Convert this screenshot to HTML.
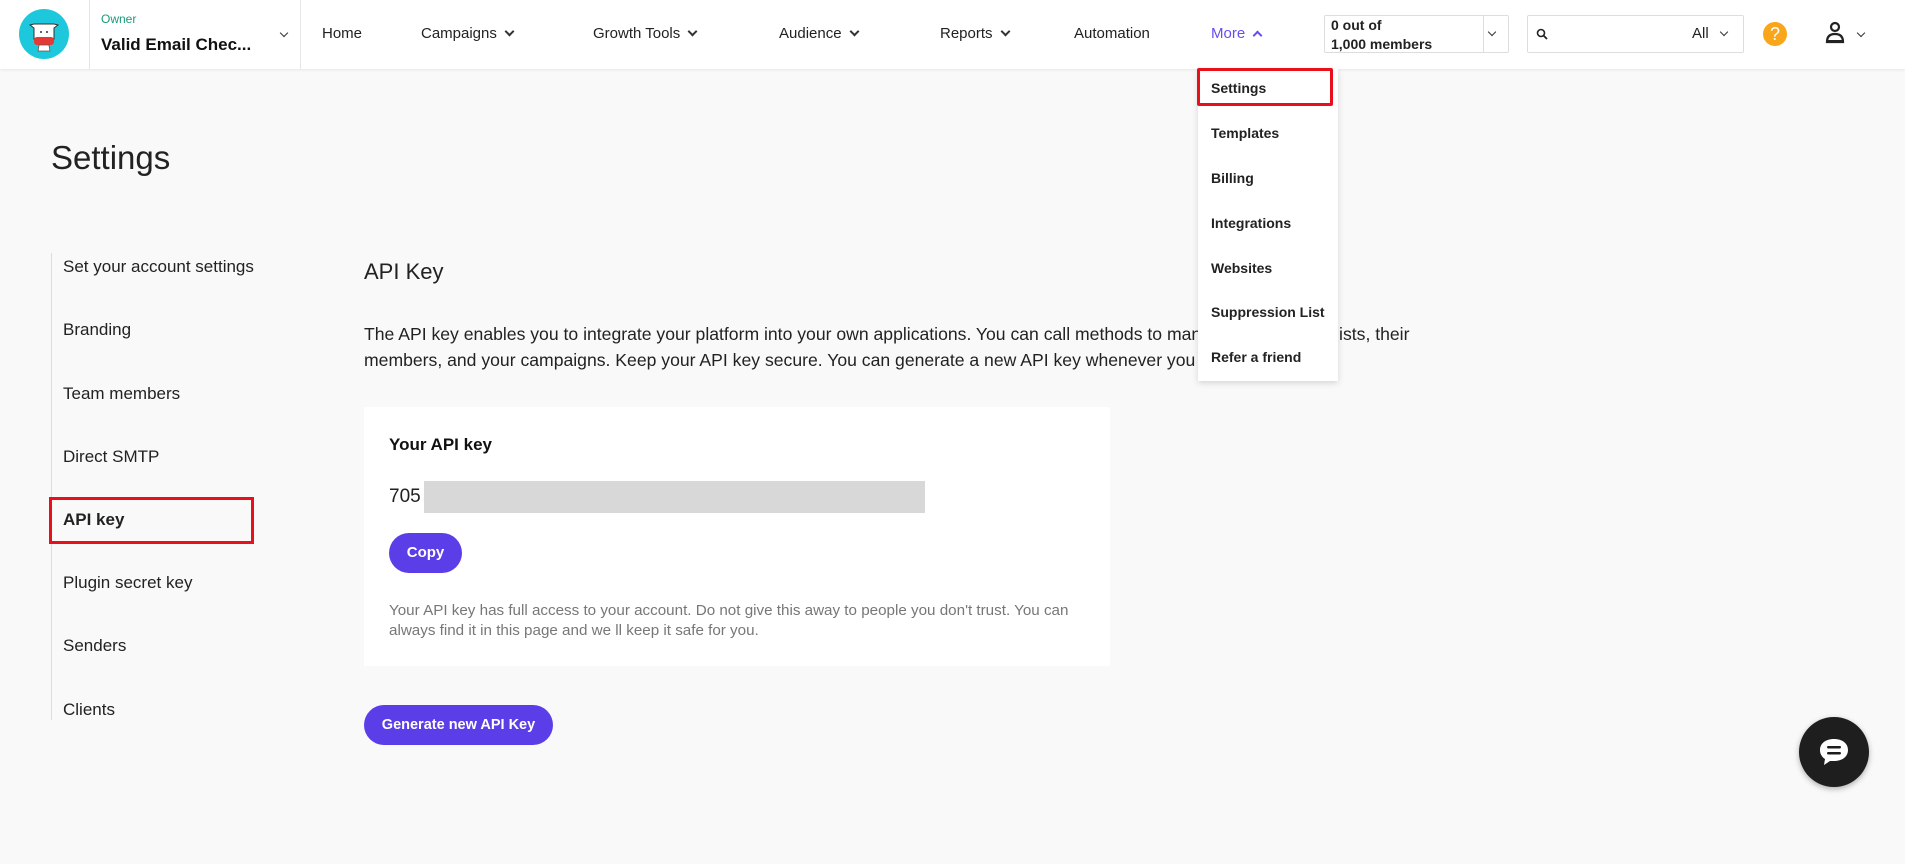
<!DOCTYPE html>
<html><head><meta charset="utf-8"><style>
*{margin:0;padding:0;box-sizing:border-box}
body{width:1905px;height:864px;background:#f9f9f9;font-family:"Liberation Sans",sans-serif;color:#222;position:relative;overflow:hidden}
.a{position:absolute;white-space:nowrap}
.hdr{position:absolute;left:0;top:0;width:1905px;height:69px;background:#fff;box-shadow:0 1px 3px rgba(0,0,0,.08)}
.nav{font-size:15px;color:#222;top:25px}
.chev{display:inline-block;width:7px;height:7px;border-right:2px solid #333;border-bottom:2px solid #333;transform:rotate(45deg);margin-left:9px;position:relative;top:-3px}
.mi{font-size:14px;font-weight:bold;left:1211px;color:#222}
.lm{font-size:17px;left:63px;color:#222}
.btn{background:#5b3ee8;color:#fff;font-weight:bold;border-radius:20px;text-align:center}
</style></head><body>
<div class="hdr"></div>
<svg class="a" style="left:19px;top:9px" width="50" height="50" viewBox="0 0 50 50">
<circle cx="25" cy="25" r="25" fill="#1ec8dc"/>
<path d="M11 16 L15 19 L15 30 L35 30 L35 19 L39 16 L35 15 L15 15 Z" fill="#fff" stroke="#333" stroke-width="1"/>
<rect x="15" y="28" width="20" height="8" rx="3" fill="#e53935"/>
<circle cx="22" cy="23" r="1" fill="#333"/><circle cx="28" cy="23" r="1" fill="#333"/>
<path d="M20 36 L30 36 L31 42 L19 42 Z" fill="#fff" stroke="#555" stroke-width=".8"/>
</svg>
<div class="a" style="left:89px;top:0;width:1px;height:69px;background:#e5e5e5"></div>
<div class="a" style="left:300px;top:0;width:1px;height:69px;background:#e5e5e5"></div>
<div class="a" style="left:101px;top:12px;font-size:12px;color:#1a9a7a">Owner</div>
<div class="a" style="left:101px;top:35px;font-size:17px;font-weight:bold;color:#111">Valid Email Chec...</div>
<div class="a" style="left:272px;top:26px"><span class="chev" style="width:6px;height:6px;border-width:1.5px"></span></div>
<div class="a nav" style="left:322px">Home</div>
<div class="a nav" style="left:421px">Campaigns<span class="chev"></span></div>
<div class="a nav" style="left:593px">Growth Tools<span class="chev"></span></div>
<div class="a nav" style="left:779px">Audience<span class="chev"></span></div>
<div class="a nav" style="left:940px">Reports<span class="chev"></span></div>
<div class="a nav" style="left:1074px">Automation</div>
<div class="a nav" style="left:1211px;color:#6a4cf0">More<span class="chev" style="border-color:#6a4cf0;transform:rotate(-135deg);top:1px"></span></div>
<div class="a" style="left:1324px;top:15px;width:185px;height:38px;border:1px solid #ddd;border-radius:2px;background:#fff"></div>
<div class="a" style="left:1483px;top:15px;width:1px;height:38px;background:#ddd"></div>
<div class="a" style="left:1331px;top:16px;font-size:14px;font-weight:bold;line-height:19px">0 out of<br>1,000 members</div>
<div class="a" style="left:1489px;top:25px"><span class="chev" style="width:6px;height:6px;border-width:1.5px;margin:0"></span></div>
<div class="a" style="left:1527px;top:15px;width:217px;height:38px;border:1px solid #ddd;border-radius:2px;background:#fff"></div>
<svg class="a" style="left:1536px;top:28px" width="12" height="12"><circle cx="5" cy="5" r="3.5" fill="none" stroke="#222" stroke-width="1.6"/><path d="M7.5 7.5 L11 11" stroke="#222" stroke-width="1.8"/></svg>
<div class="a" style="left:1692px;top:25px;font-size:15px">All</div>
<div class="a" style="left:1721px;top:25px"><span class="chev" style="width:6px;height:6px;border-width:1.5px;margin:0"></span></div>
<div class="a" style="left:1763px;top:22px;width:24px;height:24px;border-radius:50%;background:#f9a61a;color:#fff;font-size:18px;text-align:center;line-height:24px">?</div>
<svg class="a" style="left:1825px;top:21px" width="20" height="24" viewBox="0 0 20 24"><circle cx="10" cy="6" r="4" fill="none" stroke="#222" stroke-width="2.2"/><path d="M2 21 Q2 13 10 13 Q18 13 18 21 Z" fill="none" stroke="#222" stroke-width="2.2"/><rect x="2" y="19" width="16" height="3" fill="#222"/></svg>
<div class="a" style="left:1858px;top:26px"><span class="chev" style="width:6px;height:6px;border-width:1.5px;margin:0"></span></div>

<div class="a" style="left:51px;top:139px;font-size:33px;color:#222">Settings</div>
<div class="a" style="left:51px;top:253px;width:1px;height:467px;background:#ddd"></div>
<div class="a lm" style="top:257px">Set your account settings</div>
<div class="a lm" style="top:320px">Branding</div>
<div class="a lm" style="top:384px">Team members</div>
<div class="a lm" style="top:447px">Direct SMTP</div>
<div class="a lm" style="top:510px;font-weight:bold">API key</div>
<div class="a" style="left:49px;top:497px;width:205px;height:47px;border:3px solid #e8101a"></div>
<div class="a lm" style="top:573px">Plugin secret key</div>
<div class="a lm" style="top:636px">Senders</div>
<div class="a lm" style="top:700px">Clients</div>

<div class="a" style="left:364px;top:259px;font-size:22px;color:#222">API Key</div>
<div class="a" style="left:364px;top:321px;font-size:17.6px;line-height:26px;color:#222;white-space:normal;width:1095px">The API key enables you to integrate your platform into your own applications. You can call methods to manage your mailing lists, their members, and your campaigns. Keep your API key secure. You can generate a new API key whenever you want.</div>

<div class="a" style="left:1198px;top:69px;width:140px;height:312px;background:#fff;box-shadow:0 2px 6px rgba(0,0,0,.15)"></div>
<div class="a" style="left:1197px;top:68px;width:136px;height:38px;border:3px solid #e8101a;border-radius:2px"></div>
<div class="a mi" style="top:80px">Settings</div>
<div class="a mi" style="top:125px">Templates</div>
<div class="a mi" style="top:170px">Billing</div>
<div class="a mi" style="top:215px">Integrations</div>
<div class="a mi" style="top:260px">Websites</div>
<div class="a mi" style="top:304px">Suppression List</div>
<div class="a mi" style="top:349px">Refer a friend</div>

<div class="a" style="left:364px;top:407px;width:746px;height:259px;background:#fff"></div>
<div class="a" style="left:389px;top:435px;font-size:17px;font-weight:bold;color:#111">Your API key</div>
<div class="a" style="left:389px;top:486px;font-size:19px;color:#222">705</div>
<div class="a" style="left:424px;top:481px;width:501px;height:32px;background:#d8d8d8"></div>
<div class="a btn" style="left:389px;top:533px;width:73px;height:40px;line-height:40px;font-size:15px">Copy</div>
<div class="a" style="left:389px;top:601px;font-size:15.2px;line-height:20px;color:#777">Your API key has full access to your account. Do not give this away to people you don't trust. You can<br>always find it in this page and we ll keep it safe for you.</div>
<div class="a btn" style="left:364px;top:705px;width:189px;height:40px;line-height:40px;font-size:14.5px">Generate new API Key</div>

<div class="a" style="left:1799px;top:717px;width:70px;height:70px;border-radius:50%;background:#1e1e1e;box-shadow:0 2px 6px rgba(0,0,0,.3)"></div>
<svg class="a" style="left:1816px;top:734px" width="36" height="36" viewBox="0 0 36 36"><path d="M18 5 C9 5 4 10 4 16 C4 20 6 23 9 25 L8 31 L14 27 C15 27 16 27 18 27 C27 27 32 22 32 16 C32 10 27 5 18 5 Z" fill="#fff"/><rect x="11" y="12" width="14" height="2.5" rx="1.2" fill="#1e1e1e"/><rect x="11" y="18" width="14" height="2.5" rx="1.2" fill="#1e1e1e"/></svg>
</body></html>
